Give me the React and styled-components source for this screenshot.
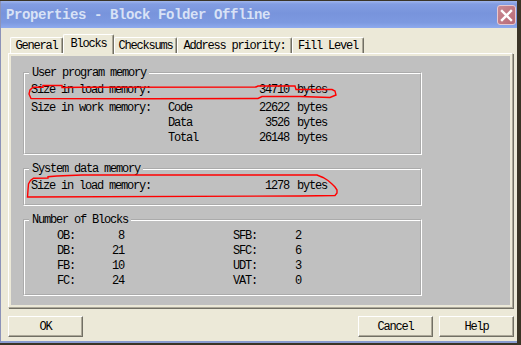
import React from 'react'
import styled, { createGlobalStyle } from 'styled-components'

const Global = createGlobalStyle`
  html, body { margin: 0; padding: 0; background: #3a3426; }
  body { width: 521px; height: 345px; overflow: hidden; }
`

const Screen = styled.div`
  position: relative;
  width: 521px;
  height: 345px;
  padding-top: 1px;
  box-sizing: border-box;
  font-family: "Liberation Mono", "DejaVu Sans Mono", monospace;
  font-size: 12px;
  letter-spacing: -1.2px;
  color: #000;
`

const Window = styled.div`
  width: 517px;
  height: 342px;
  box-sizing: border-box;
  background: #ece9d8;
  border-left: 1px solid #8c93b8;
  border-bottom: 2px solid #8a9bd0;
  display: flex;
  flex-direction: column;
`

const TitleBar = styled.div`
  height: 27px;
  display: flex;
  align-items: center;
  justify-content: space-between;
  padding: 0 1px 0 5px;
  background: linear-gradient(#9fb5ec 0, #829de2 3px, #7894dc 45%, #7c99e0 80%, #8eaaee 100%);
`

const Title = styled.span`
  font-weight: bold;
  font-size: 14px;
  letter-spacing: -0.4px;
  color: #d8e2f6;
  margin-top: 1px;
`

const CloseButton = styled.div`
  width: 19px;
  height: 20px;
  box-sizing: border-box;
  margin-top: 1px;
  border: 1px solid #e6c9d0;
  border-radius: 3px;
  background: linear-gradient(135deg, #c98a93, #b86a77);
  display: flex;
  align-items: center;
  justify-content: center;
`

const Body = styled.div`
  flex: 1;
  display: flex;
  flex-direction: column;
  padding: 6px 0 0 7px;
`

const TabRow = styled.div`
  display: flex;
  align-items: flex-end;
  height: 19px;
  padding-left: 2px;
`

const Tab = styled.div`
  position: relative;
  width: ${p => p.$w}px;
  height: ${p => (p.$active ? 20 : 16)}px;
  margin-bottom: ${p => (p.$active ? -1 : 0)}px;
  z-index: ${p => (p.$active ? 2 : 0)};
  box-sizing: border-box;
  display: flex;
  align-items: center;
  justify-content: center;
  padding-bottom: ${p => (p.$active ? 2 : 0)}px;
  background: #ece9d8;
  border-top: 1px solid #fff;
  border-left: 1px solid #fff;
  border-right: 1px solid #716f64;
  box-shadow: inset -1px 0 0 #aca899;
  border-radius: 2px 2px 0 0;
`

const Panel = styled.div`
  width: 505px;
  height: 255px;
  box-sizing: border-box;
  padding: 2px;
  border-top: 1px solid #fff;
  border-left: 1px solid #fff;
  border-right: 1px solid #aca899;
  border-bottom: 1px solid #aca899;
  box-shadow: 1px 1px 0 #716f64;
`

const Page = styled.div`
  height: 100%;
  box-sizing: border-box;
  background: #c0c0c0;
  padding: 11px 0 0 12px;
  display: flex;
  flex-direction: column;
  gap: 8px;
`

const Group = styled.fieldset`
  width: 399px;
  box-sizing: border-box;
  margin: 0;
  padding: ${p => p.$pad};
  min-width: 0;
  border: 2px groove #fff;
`

const Legend = styled.legend`
  margin-left: 4px;
  padding: 0 3px;
  line-height: 12px;
  height: 12px;
`

const MemRows = styled.div`
  display: grid;
  grid-template-columns: 137px 60px 61px auto;
  padding-left: 6px;
  line-height: 15px;
`

const Cell = styled.span`
  text-align: ${p => (p.$right ? 'right' : 'left')};
  padding-left: ${p => (p.$unit ? 8 : 0)}px;
  margin-bottom: ${p => (p.$gap ? 3 : 0)}px;
  white-space: pre;
`

const BlocksGrid = styled.div`
  display: grid;
  grid-template-columns: 67px 68px;
  column-gap: 109px;
  padding-left: 32px;
  line-height: 15px;
`

const BlockItem = styled.div`
  display: flex;
`

const BlockName = styled.span`
  width: 30px;
`

const BlockValue = styled.span`
  flex: 1;
  text-align: right;
`

const ButtonRow = styled.div`
  display: flex;
  margin-top: 8px;
  width: 506px;
  gap: 6px;
`

const Button = styled.div`
  width: 75px;
  height: 21px;
  box-sizing: border-box;
  margin-left: ${p => (p.$push ? 'auto' : '0')};
  display: flex;
  align-items: center;
  justify-content: center;
  background: #ece9d8;
  border-top: 1px solid #fff;
  border-left: 1px solid #fff;
  border-right: 1px solid #716f64;
  border-bottom: 1px solid #716f64;
  box-shadow: inset -1px -1px 0 #aca899;
`

const Marks = styled.svg`
  position: absolute;
  left: 0;
  top: 0;
  pointer-events: none;
`

const memRows = [
  ['Size in work memory:', 'Code', '22622'],
  ['', 'Data', '3526'],
  ['', 'Total', '26148'],
]

const blocks = [
  ['OB:', '8', 'SFB:', '2'],
  ['DB:', '21', 'SFC:', '6'],
  ['FB:', '10', 'UDT:', '3'],
  ['FC:', '24', 'VAT:', '0'],
]

const tabs = [
  ['General', 53],
  ['Blocks', 51, true],
  ['Checksums', 63],
  ['Address priority:', 115],
  ['Fill Level', 72],
]

export default function App() {
  return (
    <Screen>
      <Global />
      <Window>
        <TitleBar>
          <Title>Properties - Block Folder Offline</Title>
          <CloseButton>
            <svg width="13" height="13" viewBox="0 0 13 13">
              <path d="M2 2 L11 11 M11 2 L2 11" stroke="#fff" strokeWidth="2.4" strokeLinecap="square" />
            </svg>
          </CloseButton>
        </TitleBar>
        <Body>
          <TabRow>
            {tabs.map(([label, w, active]) => (
              <Tab key={label} $w={w} $active={active}>{label}</Tab>
            ))}
          </TabRow>
          <Panel>
            <Page>
              <Group $pad="4px 0 7px 0">
                <Legend>User program memory</Legend>
                <MemRows>
                  <Cell $gap>Size in load memory:</Cell>
                  <Cell $gap />
                  <Cell $gap $right>34710</Cell>
                  <Cell $gap $unit>bytes</Cell>
                  {memRows.map(([label, kind, value]) => (
                    <React.Fragment key={kind}>
                      <Cell>{label}</Cell>
                      <Cell>{kind}</Cell>
                      <Cell $right>{value}</Cell>
                      <Cell $unit>bytes</Cell>
                    </React.Fragment>
                  ))}
                </MemRows>
              </Group>
              <Group $pad="4px 0 10px 0">
                <Legend>System data memory</Legend>
                <MemRows>
                  <Cell>Size in load memory:</Cell>
                  <Cell />
                  <Cell $right>1278</Cell>
                  <Cell $unit>bytes</Cell>
                </MemRows>
              </Group>
              <Group $pad="3px 0 5px 0">
                <Legend>Number of Blocks</Legend>
                <BlocksGrid>
                  {blocks.map(([a, av, b, bv]) => (
                    <React.Fragment key={a}>
                      <BlockItem>
                        <BlockName>{a}</BlockName>
                        <BlockValue>{av}</BlockValue>
                      </BlockItem>
                      <BlockItem>
                        <BlockName>{b}</BlockName>
                        <BlockValue>{bv}</BlockValue>
                      </BlockItem>
                    </React.Fragment>
                  ))}
                </BlocksGrid>
              </Group>
            </Page>
          </Panel>
          <ButtonRow>
            <Button>OK</Button>
            <Button $push>Cancel</Button>
            <Button>Help</Button>
          </ButtonRow>
        </Body>
      </Window>
      <Marks width="521" height="345" viewBox="0 0 521 345">
        <path
          d="M33 87.3 L30 90 L29 94 L31 98.5 L150 98.8 L258 98.5 L262 96.5 L300 96.5 L330 97.5 L336 95 L335 91 L332 89.5 L296 89.5 L295 86 L258 86 L256 87 L82 87.2 L62 87.5 L62 85.5 L43 85.5 L43 87.3 Z"
          fill="none"
          stroke="#f00"
          strokeWidth="1.4"
        />
        <path
          d="M27.5 197 L28 190 L28.5 184 L30.5 180.5 L33.5 178.3 L48 178 L48 176.7 L57 176 L82 175 L317 175 L323 177.5 L328 180.5 L332 184 L335 187 L337 190 L337 193 L335 195.5 L300 196 Z"
          fill="none"
          stroke="#f00"
          strokeWidth="1.4"
        />
      </Marks>
    </Screen>
  )
}
